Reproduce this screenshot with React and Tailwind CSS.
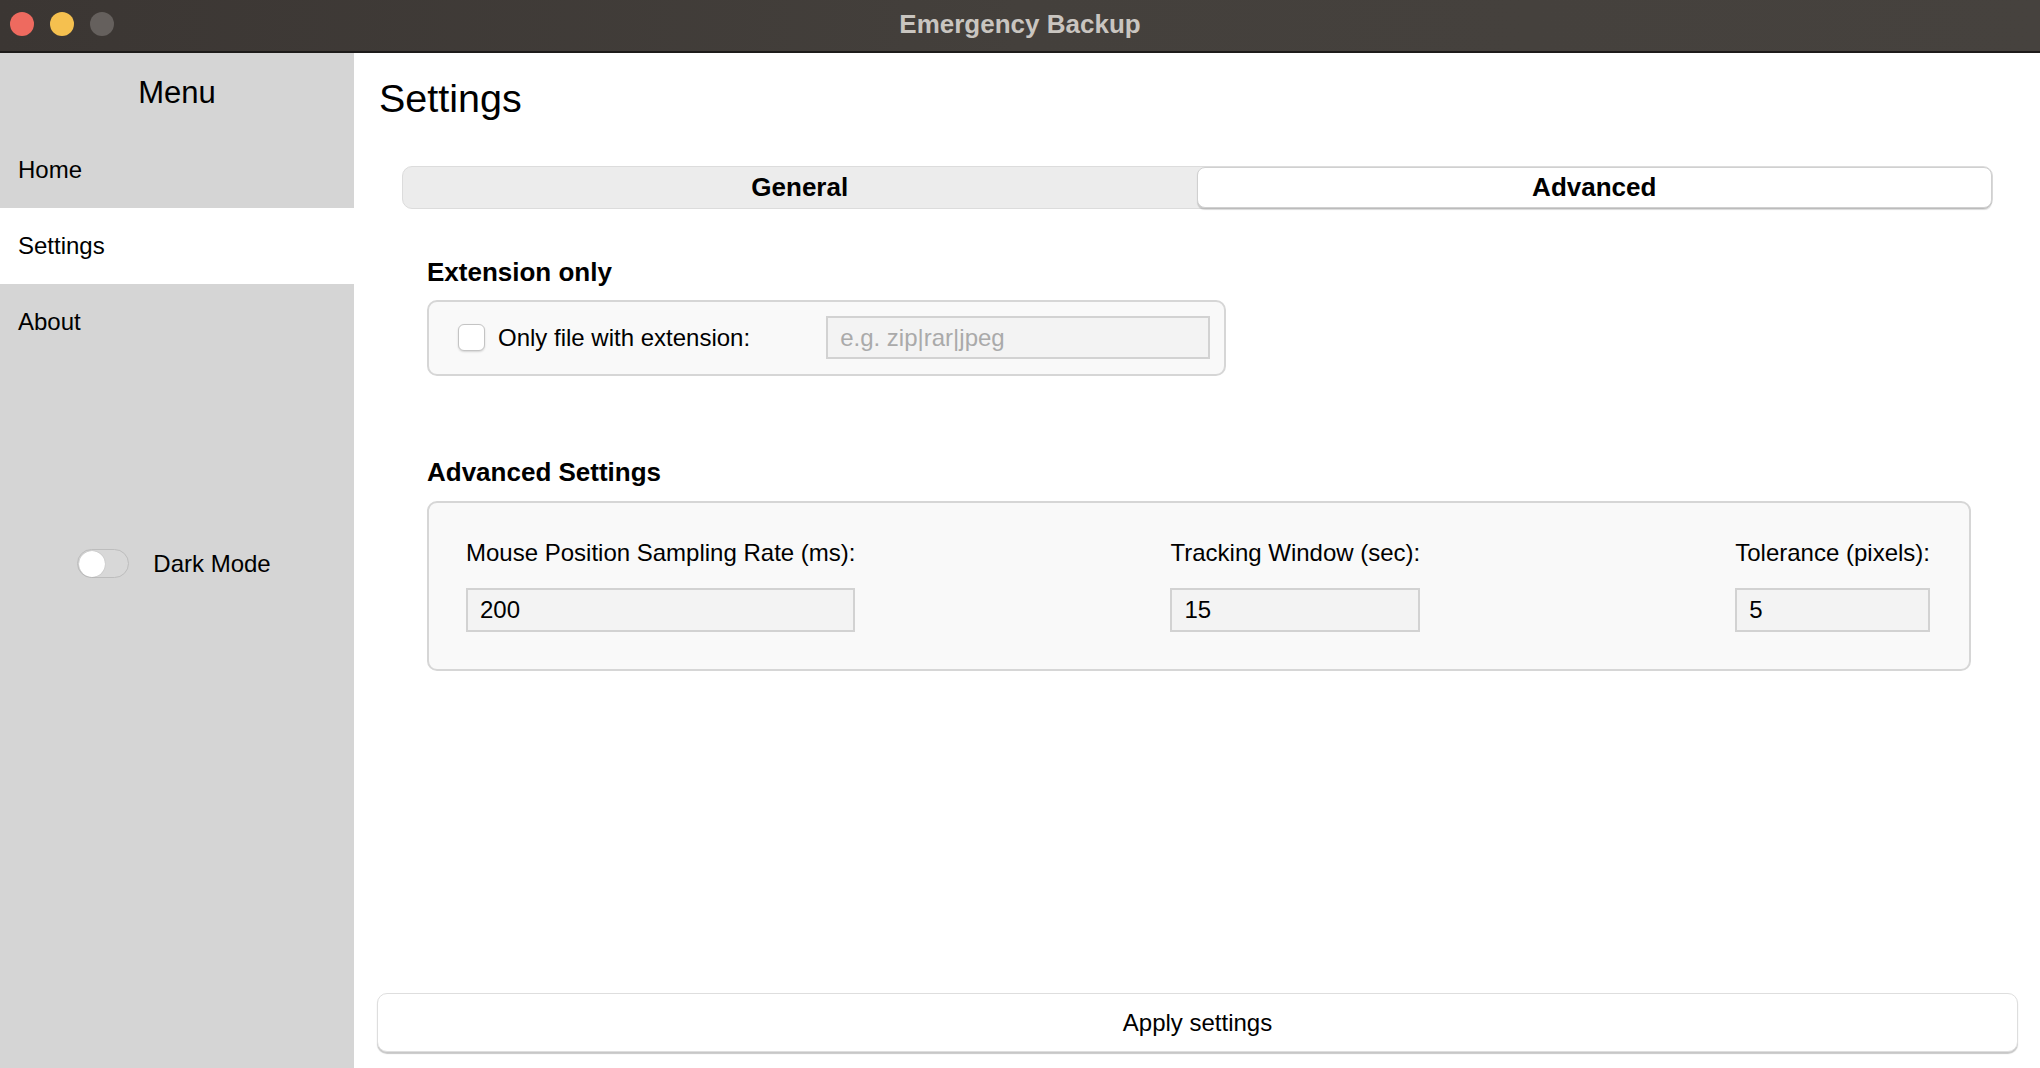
import React from "react";

const font = { fontFamily: '"Liberation Sans", Arial, Helvetica, sans-serif' };

function TitleBar() {
  return (
    <div className="grid h-[53px] shrink-0 grid-cols-[1fr_auto_1fr] items-center border-b-2 border-[#1d1b1a] bg-gradient-to-r from-[#3b3633] via-[#44403c] to-[#46423e] pb-[4px]">
      <div className="flex items-center gap-[16px] pl-[10px]">
        <span className="h-[24px] w-[24px] rounded-full bg-[#ee6a5f]" />
        <span className="h-[24px] w-[24px] rounded-full bg-[#f5c04f]" />
        <span className="h-[24px] w-[24px] rounded-full bg-[#65605d]" />
      </div>
      <div className="text-[26px] font-bold leading-none text-[#c9c5c0]">Emergency Backup</div>
      <div />
    </div>
  );
}

function Sidebar() {
  return (
    <div className="flex w-[354px] shrink-0 flex-col bg-[#d5d5d5] text-black">
      <div className="flex h-[79px] items-center justify-center text-[31px] leading-none">Menu</div>
      <div className="flex h-[76px] items-center pl-[18px] text-[24px] leading-none">Home</div>
      <div className="flex h-[76px] items-center bg-white pl-[18px] text-[24px] leading-none">Settings</div>
      <div className="flex h-[76px] items-center pl-[18px] text-[24px] leading-none">About</div>
      <div className="mt-[189px] flex items-center justify-center gap-[24px] pr-[6px]">
        <div className="flex h-[29px] w-[52px] items-center rounded-full border border-[#bdbdbd] bg-[#d8d8d8] pl-[1px]">
          <div className="h-[26px] w-[26px] rounded-full bg-white shadow-[0_0_1px_rgba(0,0,0,0.3)]" />
        </div>
        <span className="text-[24px] leading-none">Dark Mode</span>
      </div>
    </div>
  );
}

function Field({ label, value }) {
  return (
    <div className="inline-flex flex-col">
      <span className="whitespace-nowrap text-[24px] leading-none text-black">{label}</span>
      <div className="mt-[23px] flex h-[44px] w-full items-center border-2 border-[#d2d2d2] bg-[#f3f3f3] pl-[12px] text-[24px] leading-none text-black">
        {value}
      </div>
    </div>
  );
}

function Main() {
  return (
    <div className="flex min-w-0 flex-1 flex-col bg-white pl-[23px] pr-[22px] text-black">
      <h1 className="ml-[2px] mt-[26px] text-[39.5px] font-normal leading-none">Settings</h1>

      <div className="mx-[25px] mt-[47px] flex h-[43px] rounded-[10px] border border-[#dcdcdc] bg-[#ececec]">
        <div className="flex flex-1 items-center justify-center text-[26px] font-bold leading-none">General</div>
        <div className="flex flex-1 items-center justify-center rounded-[8px] border border-[#d0d0d0] bg-white text-[26px] font-bold leading-none shadow-[0_2px_1px_rgba(0,0,0,0.15)]">
          Advanced
        </div>
      </div>

      <div className="ml-[50px] mr-[47px] flex flex-col">
        <h2 className="mt-[50px] text-[26px] font-bold leading-none">Extension only</h2>
        <div className="mt-[15px] flex h-[76px] w-[799px] items-center rounded-[10px] border-2 border-[#d6d6d6] bg-[#f9f9f9] pl-[29px]">
          <div className="h-[27px] w-[27px] rounded-[6px] border border-[#c4c4c4] bg-white shadow-[0_1px_2px_rgba(0,0,0,0.15)]" />
          <span className="ml-[13px] text-[24px] leading-none">Only file with extension:</span>
          <div className="ml-[76px] flex h-[43px] w-[384px] items-center border-2 border-[#d2d2d2] bg-[#f3f3f3] pl-[12px] text-[24px] leading-none text-[#aaaaaa]">
            e.g. zip|rar|jpeg
          </div>
        </div>

        <h2 className="mt-[83px] text-[26px] font-bold leading-none">Advanced Settings</h2>
        <div className="mt-[16px] flex h-[170px] items-start justify-between rounded-[10px] border-2 border-[#d6d6d6] bg-[#f9f9f9] pl-[37px] pr-[39px] pt-[38px]">
          <Field label="Mouse Position Sampling Rate (ms):" value="200" />
          <Field label="Tracking Window (sec):" value="15" />
          <Field label="Tolerance (pixels):" value="5" />
        </div>
      </div>

      <div className="flex-1" />
      <button className="mb-[16px] flex h-[59px] w-full items-center justify-center rounded-[10px] border border-[#dedede] bg-white text-[24px] leading-none text-black shadow-[0_2px_1px_rgba(0,0,0,0.22)]">
        Apply settings
      </button>
    </div>
  );
}

export default function App() {
  return (
    <div style={font} className="flex h-[1068px] w-[2040px] flex-col overflow-hidden bg-white">
      <TitleBar />
      <div className="flex min-h-0 flex-1">
        <Sidebar />
        <Main />
      </div>
    </div>
  );
}
